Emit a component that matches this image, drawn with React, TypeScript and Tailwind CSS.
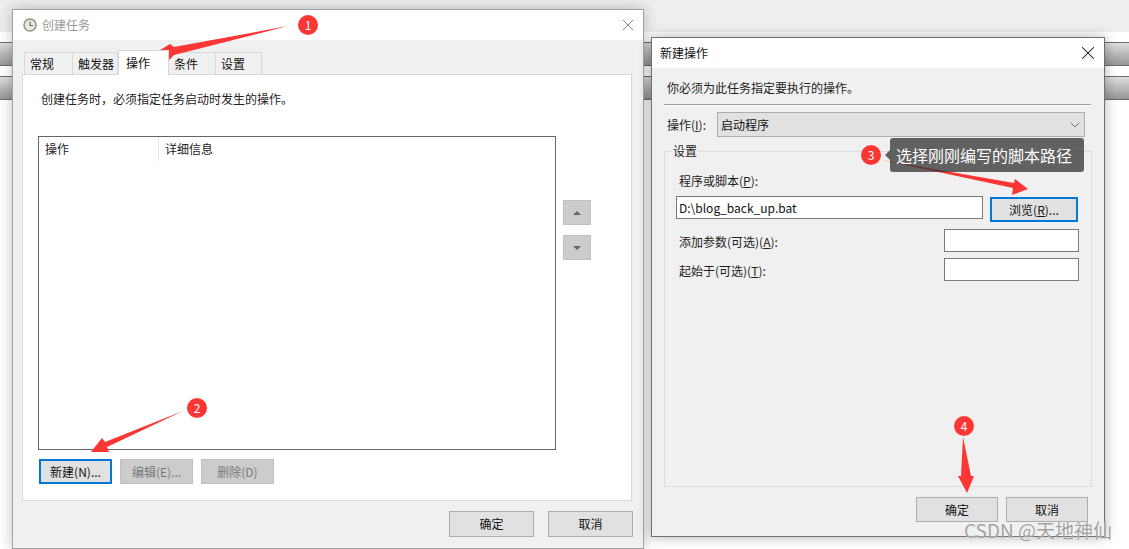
import { ReactNode } from 'react';
import { X, ChevronDown } from 'lucide-react';

const FONT = '"Noto Sans CJK SC", "Noto Sans", sans-serif';

function WinButton({ label, className, disabled, focused }: { label: ReactNode; className: string; disabled?: boolean; focused?: boolean }) {
  return (
    <div
      className={`flex items-center justify-center text-xs ${className} ${
        focused
          ? 'border-2 border-[#0078d7] bg-[#e1e1e1] text-[#111]'
          : disabled
            ? 'border border-[#bfbfbf] bg-[#cccccc] text-[#7a7a7a]'
            : 'border border-[#adadad] bg-[#e1e1e1] text-[#111]'
      }`}
    >
      {label}
    </div>
  );
}

function Tab({ label, width, active }: { label: string; width: string; active?: boolean }) {
  return (
    <div
      className={
        active
          ? `relative z-10 -mt-[2px] -mb-px flex h-[25px] items-center border border-b-0 border-[#d9d9d9] bg-white pl-[7px] text-xs text-[#111] ${width}`
          : `-ml-px flex h-[22px] items-center border border-b-0 border-[#d9d9d9] bg-[#f0f0f0] pl-[5px] text-xs text-[#111] ${width}`
      }
    >
      {label}
    </div>
  );
}

function Badge({ n, className }: { n: number; className: string }) {
  return (
    <div className={`absolute flex h-5 w-5 items-center justify-center rounded-full bg-[#fc3535] text-xs text-white ${className}`}>
      {n}
    </div>
  );
}

function Backdrop() {
  return (
    <div className="absolute inset-0 flex flex-col bg-white">
      <div className="h-[32px] bg-[#eeeeee]" />
      <div className="mt-[10px] h-[24px] border-y border-[#6b6b6b] bg-gradient-to-b from-[#dedede] to-[#969696]" />
      <div className="mt-[10px] h-[24px] border-y border-[#6b6b6b] bg-gradient-to-b from-[#dedede] to-[#969696]" />
    </div>
  );
}

function TaskWindow() {
  return (
    <div className="absolute left-[12px] top-[9px] flex h-[540px] w-[632px] flex-col border border-[#a3a3a3] bg-[#f0f0f0] shadow-[0_0_12px_rgba(0,0,0,0.25)]">
      <div className="flex h-[30px] items-center bg-white pl-[10px] pr-[5px]">
        <svg width="14" height="14" viewBox="0 0 14 14" className="mr-[5px]">
          <circle cx="7" cy="7" r="6" fill="#efe9d6" stroke="#8f8f8f" strokeWidth="1.5" />
          <path d="M7 3.5V7.5H10" fill="none" stroke="#666" strokeWidth="1.1" />
        </svg>
        <span className="text-xs text-[#9a9a9a]">创建任务</span>
        <X className="ml-auto h-5 w-5 text-[#8c8c8c]" strokeWidth={1.2} />
      </div>
      <div className="flex pl-[12px] pt-[12px]">
        <Tab label="常规" width="w-[49px]" />
        <Tab label="触发器" width="w-[46px]" />
        <Tab label="操作" width="w-[51px]" active />
        <Tab label="条件" width="w-[48px]" />
        <Tab label="设置" width="w-[47px]" />
      </div>
      <div className="ml-[9px] mr-[11px] flex h-[427px] flex-col border border-[#d9d9d9] bg-white pl-[15px]">
        <div className="pl-[3px] pt-[16px] text-xs text-[#222]">创建任务时，必须指定任务启动时发生的操作。</div>
        <div className="mt-[29px] flex gap-[7px]">
          <div className="h-[314px] w-[518px] border border-[#666] bg-white">
            <div className="flex h-[24px] text-xs text-[#222]">
              <div className="flex w-[120px] items-center border-r border-[#e5e5e5] pl-[6px]">操作</div>
              <div className="flex items-center pl-[6px]">详细信息</div>
            </div>
          </div>
          <div className="flex flex-col gap-[10px] pt-[64px]">
            <div className="flex h-[25px] w-[28px] items-center justify-center border border-[#bfbfbf] bg-[#cccccc]">
              <div className="h-0 w-0 border-x-[4px] border-b-[4px] border-x-transparent border-b-[#666]" />
            </div>
            <div className="flex h-[25px] w-[28px] items-center justify-center border border-[#bfbfbf] bg-[#cccccc]">
              <div className="h-0 w-0 border-x-[4px] border-t-[4px] border-x-transparent border-t-[#666]" />
            </div>
          </div>
        </div>
        <div className="ml-px mt-[9px] flex gap-2">
          <WinButton label="新建(N)..." focused className="h-[25px] w-[73px]" />
          <WinButton label="编辑(E)..." disabled className="h-[25px] w-[73px]" />
          <WinButton label="删除(D)" disabled className="h-[25px] w-[73px]" />
        </div>
      </div>
      <div className="mr-[10px] mt-[10px] flex justify-end gap-[14px]">
        <WinButton label="确定" className="h-[26px] w-[85px]" />
        <WinButton label="取消" className="h-[26px] w-[85px]" />
      </div>
    </div>
  );
}

function NewActionWindow() {
  return (
    <div className="absolute left-[651px] top-[37px] flex h-[500px] w-[454px] flex-col border border-[#707070] bg-[#f0f0f0] shadow-[0_0_12px_rgba(0,0,0,0.3)]">
      <div className="flex h-[30px] items-center bg-white pl-[8px] pr-[5px] text-xs text-[#111]">
        <span>新建操作</span>
        <X className="ml-auto h-[22px] w-[22px] text-[#111]" strokeWidth={1.1} />
      </div>
      <div className="pl-[15px] pt-[12px] text-xs text-[#222]">你必须为此任务指定要执行的操作。</div>
      <div className="ml-[12px] mr-[13px] mt-[8px] border-y border-t-[#a0a0a0] border-b-white" />
      <div className="flex items-center pl-[15px] pt-[6px] text-xs text-[#222]">
        <span className="w-[50px]">操作(<u>I</u>):</span>
        <div className="flex h-[25px] w-[368px] items-center border border-[#adadad] bg-[#e1e1e1] pl-[3px] text-[#111]">
          启动程序
          <ChevronDown className="ml-auto mr-[1px] h-[16px] w-[16px] text-[#444]" strokeWidth={1.1} />
        </div>
      </div>
      <div className="relative ml-[12px] mr-[12px] mt-[14px] h-[336px] border border-[#dcdcdc] pl-[14px] text-xs text-[#222]">
        <span className="absolute -top-[9px] left-[7px] bg-[#f0f0f0] px-px">设置</span>
        <div className="pt-[21px]">程序或脚本(<u>P</u>):</div>
        <div className="-ml-[3px] mt-[7px] flex gap-[7px]">
          <div className="flex h-[23px] w-[307px] items-center border border-[#7a7a7a] bg-white pl-[2px] text-[#111]">D:\blog_back_up.bat</div>
          <WinButton label={<span>浏览(<u>R</u>)...</span>} focused className="mt-px h-[25px] w-[88px]" />
        </div>
        <div className="mt-[7px] flex items-center justify-between pr-[12px]">
          <span className="pt-[2px]">添加参数(可选)(<u>A</u>):</span>
          <div className="h-[23px] w-[135px] border border-[#7a7a7a] bg-white" />
        </div>
        <div className="mt-[6px] flex items-center justify-between pr-[12px]">
          <span className="pt-[2px]">起始于(可选)(<u>T</u>):</span>
          <div className="h-[23px] w-[135px] border border-[#7a7a7a] bg-white" />
        </div>
      </div>
      <div className="mr-[16px] mt-[10px] flex justify-end gap-[8px]">
        <WinButton label="确定" className="h-[25px] w-[82px]" />
        <WinButton label="取消" className="h-[25px] w-[82px]" />
      </div>
    </div>
  );
}

function Arrows() {
  return (
    <svg className="pointer-events-none absolute inset-0" width="1129" height="549" viewBox="0 0 1129 549">
      <path d="M288 26L174 47L170 44L155 53L169 60L174 55Z" fill="#fc3535" />
      <path d="M183 411L105 442L102 438L91 452L109 452L107 447Z" fill="#fc3535" />
      <path d="M882 160L1014 183L1015 179L1028 189L1012 195L1013 188Z" fill="#fc3535" />
      <path d="M963 437L961 476L958 476L967 493L974 476L971 476Z" fill="#fc3535" />
    </svg>
  );
}

export default function App() {
  return (
    <div className="relative h-[549px] w-[1129px] overflow-hidden" style={{ fontFamily: FONT }}>
      <Backdrop />
      <TaskWindow />
      <NewActionWindow />
      <Arrows />
      <Badge n={1} className="left-[298px] top-[15px]" />
      <Badge n={2} className="left-[187px] top-[398px]" />
      <Badge n={3} className="left-[861px] top-[145px]" />
      <Badge n={4} className="left-[954px] top-[416px]" />
      <div className="absolute left-[890px] top-[138px] flex h-[34px] w-[194px] items-center rounded-[3px] bg-[#323232]/75 pl-[6px] text-base text-white">
        <div className="absolute -left-[5px] top-[12px] h-0 w-0 border-y-[5px] border-r-[5px] border-y-transparent border-r-[#606060]" />
        选择刚刚编写的脚本路径
      </div>
      <div className="absolute left-[964px] top-[520px] text-[19px] leading-[19px] text-[#8f8f8f]/85 [text-shadow:0_0_1px_#fff]">CSDN @天地神仙</div>
    </div>
  );
}
